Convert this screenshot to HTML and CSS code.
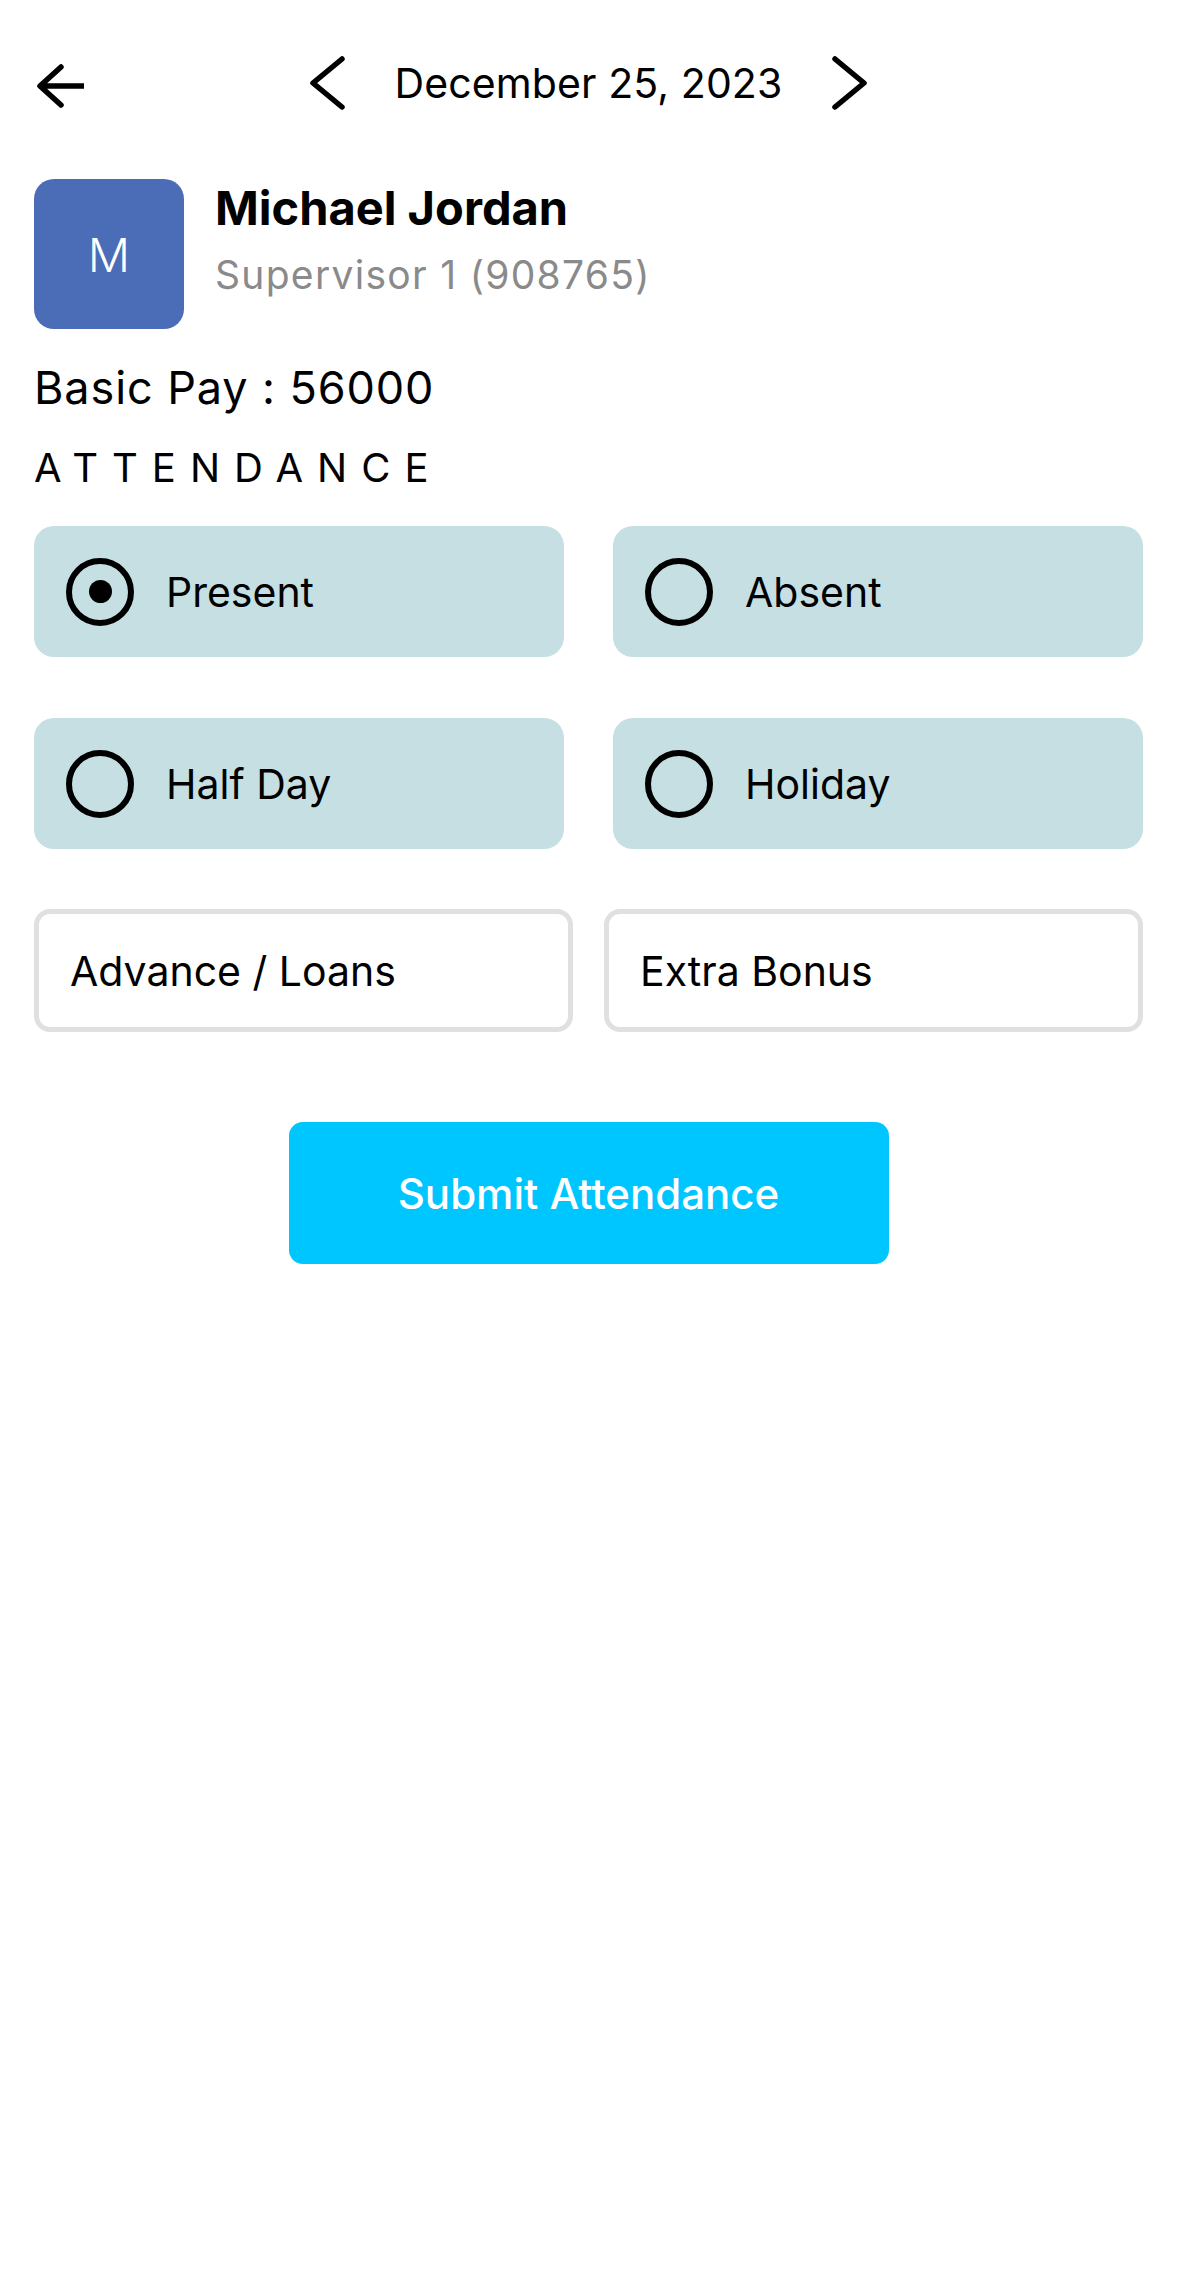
FILE: index.html
```html
<!DOCTYPE html>
<html lang="en">
<head>
<meta charset="utf-8">
<title>Attendance</title>
<link rel="stylesheet" href="styles.css">
</head>
<body>
<div class="page">
  <header class="topbar">
    <button class="back" aria-label="Back">
      <svg width="49" height="44" viewBox="0 0 49 44"><path d="M26 3 L5 22 L26 41 M6 22 H49" fill="none" stroke="#000" stroke-width="5.5" stroke-linecap="round" stroke-linejoin="round"/></svg>
    </button>
    <div class="datenav">
      <svg class="chev" width="36" height="54" viewBox="0 0 36 54"><path d="M33 3 L4 27 L33 51" fill="none" stroke="#000" stroke-width="5.5" stroke-linecap="round" stroke-linejoin="round"/></svg>
      <span class="date">December 25, 2023</span>
      <svg class="chev" width="36" height="54" viewBox="0 0 36 54"><path d="M3 3 L32 27 L3 51" fill="none" stroke="#000" stroke-width="5.5" stroke-linecap="round" stroke-linejoin="round"/></svg>
    </div>
    <div></div>
  </header>

  <section class="profile">
    <div class="avatar">M</div>
    <div class="info">
      <div class="name">Michael Jordan</div>
      <div class="role">Supervisor 1 (908765)</div>
    </div>
  </section>

  <div class="pay">Basic Pay : 56000</div>
  <div class="section-title">ATTENDANCE</div>

  <div class="options">
    <div class="option"><span class="radio checked"></span><span>Present</span></div>
    <div class="option"><span class="radio"></span><span>Absent</span></div>
    <div class="option"><span class="radio"></span><span>Half Day</span></div>
    <div class="option"><span class="radio"></span><span>Holiday</span></div>
  </div>

  <div class="inputs">
    <div class="field">Advance / Loans</div>
    <div class="field">Extra Bonus</div>
  </div>

  <div class="actions">
    <button class="submit">Submit Attendance</button>
  </div>
</div>
</body>
</html>
```
FILE: styles.css
```css
* { box-sizing: border-box; }
html, body { margin: 0; background: #fff; }
body {
  font-family: Inter, "Noto Sans", "Liberation Sans", sans-serif;
  color: #000;
  width: 1177px;
  min-height: 2280px;
}
.page { padding: 0 34px; }

.topbar {
  display: grid;
  grid-template-columns: 1fr auto 1fr;
  align-items: center;
  height: 54px;
  margin-top: 56px;
}
.back {
  background: none; border: 0; padding: 0; margin: 6px 0 0 1px;
  width: 49px; height: 44px; display: block; justify-self: start;
}
.back svg, .chev { display: block; }
.datenav { display: flex; align-items: center; gap: 50px; }
.date { font-size: 41px; line-height: 54px; letter-spacing: 0.1px; }

.profile {
  display: flex;
  gap: 31px;
  margin-top: 69px;
}
.avatar {
  width: 150px; height: 150px;
  border-radius: 20px;
  background: #4b6db7;
  color: #fff;
  font-size: 47px;
  font-weight: 300;
  display: flex; align-items: center; justify-content: center;
}
.name { font-size: 47px; font-weight: 700; line-height: 56px; margin-top: 1px; }
.role { font-size: 39px; line-height: 46px; color: #8a8a8a; margin-top: 16px; letter-spacing: 1.3px; }

.pay { font-size: 45px; line-height: 52px; margin-top: 33px; letter-spacing: 0.9px; }
.section-title {
  font-size: 40px; line-height: 48px; margin-top: 30px;
  letter-spacing: 0.35em;
}

.options {
  display: grid;
  grid-template-columns: 1fr 1fr;
  column-gap: 49px;
  row-gap: 61px;
  margin-top: 34px;
}
.option {
  height: 131px;
  background: #c5dfe3;
  border-radius: 20px;
  display: flex; align-items: center;
  padding-left: 32px;
  gap: 32px;
  font-size: 41px;
}
.radio {
  width: 68px; height: 68px;
  border: 6px solid #000;
  border-radius: 50%;
  display: flex; align-items: center; justify-content: center;
  flex: none;
}
.radio.checked::after {
  content: "";
  width: 23px; height: 23px; border-radius: 50%; background: #000;
}

.inputs {
  display: grid;
  grid-template-columns: 1fr 1fr;
  column-gap: 31px;
  margin-top: 60px;
}
.field {
  height: 123px;
  border: 5px solid #e0e0e0;
  border-radius: 16px;
  display: flex; align-items: center;
  padding-left: 31px;
  font-size: 41px;
}

.actions { display: flex; justify-content: center; margin-top: 90px; }
.submit {
  width: 600px; height: 142px;
  border: 0; border-radius: 14px;
  background: #00c6ff;
  color: #fff;
  font-family: Inter, "Noto Sans", "Liberation Sans", sans-serif;
  font-size: 42px;
  font-weight: 500;
}
```
